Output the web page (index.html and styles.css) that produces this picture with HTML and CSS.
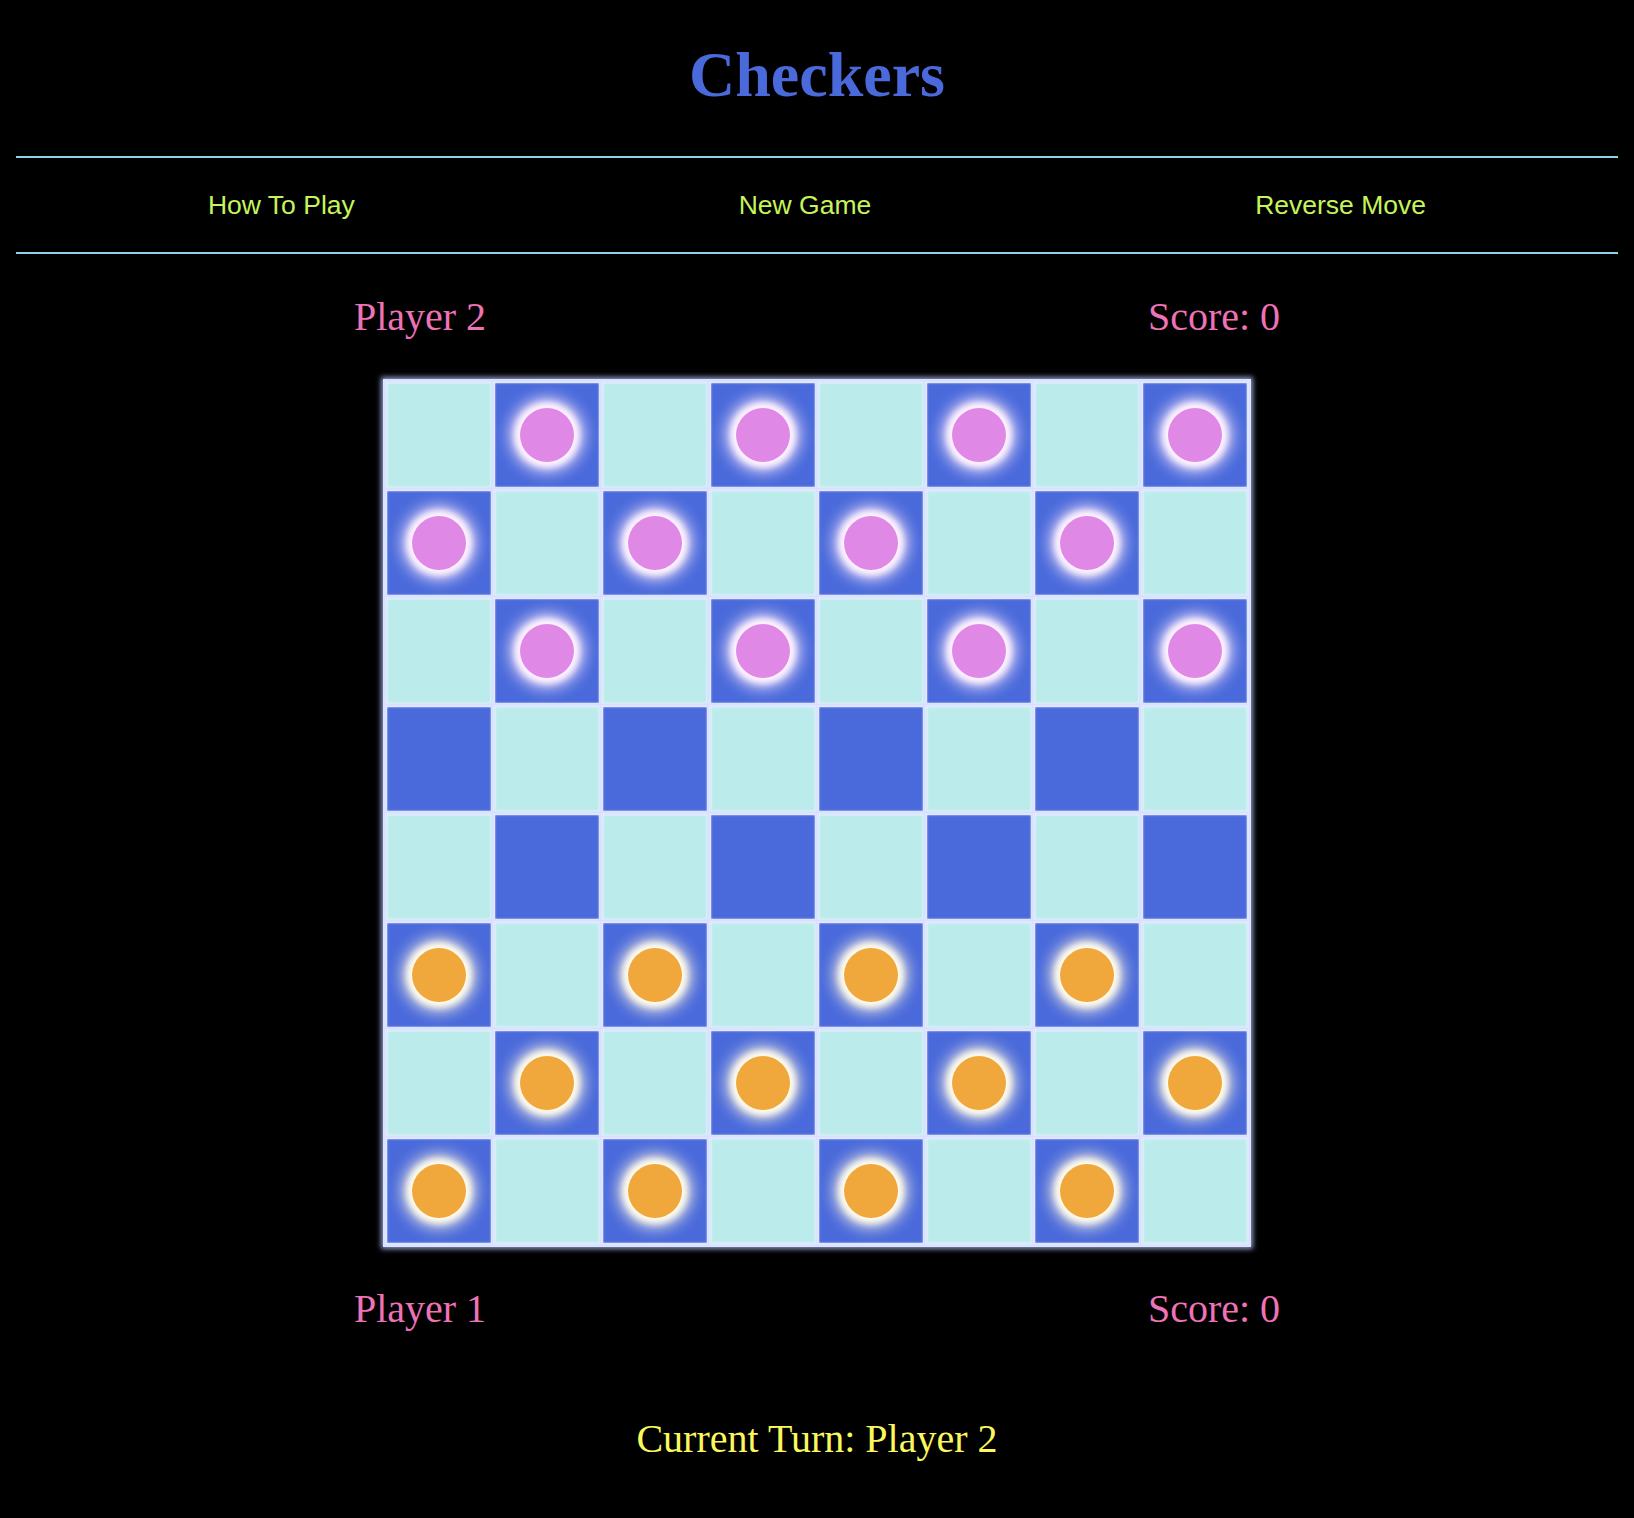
FILE: index.html
```html
<!DOCTYPE html>
<html lang="en">
<head>
<meta charset="utf-8">
<title>Checkers</title>
<link rel="stylesheet" href="styles.css">
</head>
<body>
<h1 class="title">Checkers</h1>
<nav class="nav">
  <a class="nav-link">How To Play</a>
  <a class="nav-link">New Game</a>
  <a class="nav-link">Reverse Move</a>
</nav>
<div class="player-row">
  <span class="player-name">Player 2</span>
  <span class="player-score">Score: 0</span>
</div>
<div class="board">
  <div class="cell light"></div><div class="cell dark"><span class="piece p2"></span></div><div class="cell light"></div><div class="cell dark"><span class="piece p2"></span></div><div class="cell light"></div><div class="cell dark"><span class="piece p2"></span></div><div class="cell light"></div><div class="cell dark"><span class="piece p2"></span></div>
  <div class="cell dark"><span class="piece p2"></span></div><div class="cell light"></div><div class="cell dark"><span class="piece p2"></span></div><div class="cell light"></div><div class="cell dark"><span class="piece p2"></span></div><div class="cell light"></div><div class="cell dark"><span class="piece p2"></span></div><div class="cell light"></div>
  <div class="cell light"></div><div class="cell dark"><span class="piece p2"></span></div><div class="cell light"></div><div class="cell dark"><span class="piece p2"></span></div><div class="cell light"></div><div class="cell dark"><span class="piece p2"></span></div><div class="cell light"></div><div class="cell dark"><span class="piece p2"></span></div>
  <div class="cell dark"></div><div class="cell light"></div><div class="cell dark"></div><div class="cell light"></div><div class="cell dark"></div><div class="cell light"></div><div class="cell dark"></div><div class="cell light"></div>
  <div class="cell light"></div><div class="cell dark"></div><div class="cell light"></div><div class="cell dark"></div><div class="cell light"></div><div class="cell dark"></div><div class="cell light"></div><div class="cell dark"></div>
  <div class="cell dark"><span class="piece p1"></span></div><div class="cell light"></div><div class="cell dark"><span class="piece p1"></span></div><div class="cell light"></div><div class="cell dark"><span class="piece p1"></span></div><div class="cell light"></div><div class="cell dark"><span class="piece p1"></span></div><div class="cell light"></div>
  <div class="cell light"></div><div class="cell dark"><span class="piece p1"></span></div><div class="cell light"></div><div class="cell dark"><span class="piece p1"></span></div><div class="cell light"></div><div class="cell dark"><span class="piece p1"></span></div><div class="cell light"></div><div class="cell dark"><span class="piece p1"></span></div>
  <div class="cell dark"><span class="piece p1"></span></div><div class="cell light"></div><div class="cell dark"><span class="piece p1"></span></div><div class="cell light"></div><div class="cell dark"><span class="piece p1"></span></div><div class="cell light"></div><div class="cell dark"><span class="piece p1"></span></div><div class="cell light"></div>
</div>
<div class="player-row bottom">
  <span class="player-name">Player 1</span>
  <span class="player-score">Score: 0</span>
</div>
<p class="turn">Current Turn: Player 2</p>
</body>
</html>
```
FILE: styles.css
```css
html, body {
  margin: 0;
  padding: 0;
  background: #000;
}
body {
  padding: 0 16px;
  font-family: "Liberation Serif", "Times New Roman", serif;
}
.title {
  margin: 38px 0 44px;
  font-size: 64px;
  line-height: 74px;
  font-weight: bold;
  text-align: center;
  color: #4a6adb;
}
.nav {
  display: flex;
  justify-content: space-around;
  border-top: 2px solid #92d0ea;
  border-bottom: 2px solid #92d0ea;
  padding: 32px 0;
}
.nav-link {
  font-family: "Liberation Sans", Arial, sans-serif;
  font-size: 26.5px;
  line-height: 30px;
  color: #c6f45a;
}
.player-row {
  display: flex;
  justify-content: space-around;
  padding: 0 7px;
  margin: 40px 0 39px;
  font-size: 40px;
  line-height: 46px;
  color: #ee72b6;
}
.player-row.bottom {
  margin: 39px 0 84px;
}
.board {
  width: 864px;
  margin: 0 auto;
  display: grid;
  grid-template-columns: repeat(8, 108px);
  grid-auto-rows: 108px;
  border: 2px solid #dfe6ff;
  box-shadow: 0 0 5px 2px #8e9ac8;
}
.cell {
  border: 2px solid #dfe6ff;
  box-shadow: inset 0 0 2px #ffffff, 0 0 2px #c9d3ff;
  display: flex;
  align-items: center;
  justify-content: center;
}
.cell.light {
  background: #bcebec;
}
.cell.dark {
  background: #4a6adb;
}
.piece {
  width: 54px;
  height: 54px;
  border-radius: 50%;
}
.piece.p2 {
  background: #e088e5;
  box-shadow: 0 0 6px 5px #fff4ff, 0 0 16px 9px #fbe6fb;
}
.piece.p1 {
  background: #f0a83c;
  box-shadow: 0 0 6px 5px #fffcef, 0 0 16px 9px #f8f0dc;
}
.turn {
  margin: 0;
  text-align: center;
  font-size: 40px;
  line-height: 46px;
  color: #fbf85c;
}
```
